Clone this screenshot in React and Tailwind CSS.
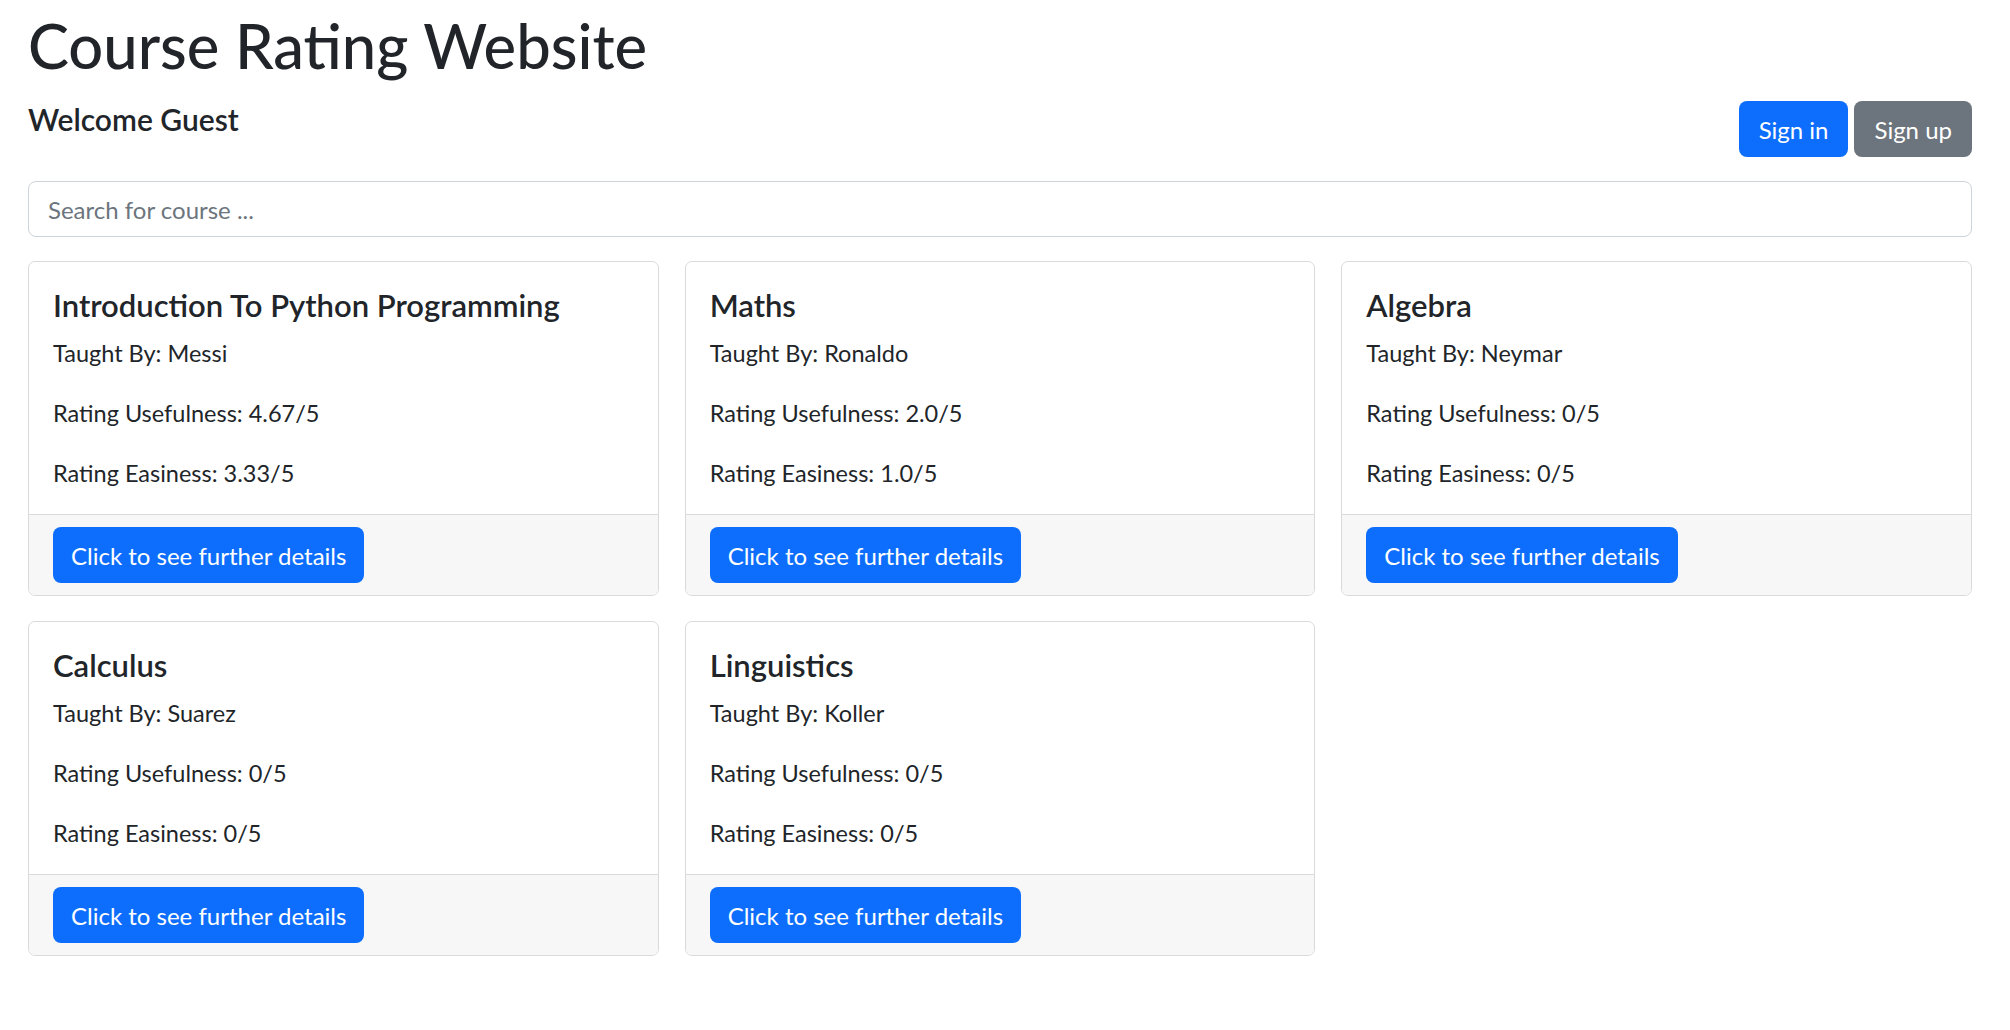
import React from "react";

const courses = [
  { title: "Introduction To Python Programming", teacher: "Messi", useful: "4.67/5", easy: "3.33/5" },
  { title: "Maths", teacher: "Ronaldo", useful: "2.0/5", easy: "1.0/5" },
  { title: "Algebra", teacher: "Neymar", useful: "0/5", easy: "0/5" },
  { title: "Calculus", teacher: "Suarez", useful: "0/5", easy: "0/5" },
  { title: "Linguistics", teacher: "Koller", useful: "0/5", easy: "0/5" },
];

function CourseCard({ c }) {
  return (
    <div className="flex flex-col overflow-hidden rounded-[7px] border border-[#dadada] bg-white">
      <div className="px-[24px] pt-[25px] pb-[23px]">
        <h5 className="mb-[12px] text-[31px] font-semibold leading-[36px]">{c.title}</h5>
        <p className="mb-[24px] text-[23.5px] leading-[36px]">Taught By: {c.teacher}</p>
        <p className="mb-[24px] text-[23.5px] leading-[36px]">Rating Usefulness: {c.useful}</p>
        <p className="text-[23.5px] leading-[36px]">Rating Easiness: {c.easy}</p>
      </div>
      <div className="border-t border-[#dadada] bg-[#f7f7f7] px-[24px] py-[12px]">
        <button className="h-[56px] rounded-[8px] bg-[#0d6efd] px-[18px] pt-[1px] text-[24px] leading-[36px] text-white">
          Click to see further details
        </button>
      </div>
    </div>
  );
}

export default function App() {
  return (
    <div
      className="min-h-screen bg-white pl-[28px] pr-[38px] pt-[9px] pb-[40px] text-[#212529]"
      style={{ fontFamily: 'Lato, "Liberation Sans", sans-serif' }}
    >
      <h1 className="text-[61.5px] font-medium leading-[72px]">Course Rating Website</h1>
      <div className="mt-[20px] flex items-start justify-between">
        <h5 className="text-[30px] font-semibold leading-[36px]">Welcome Guest</h5>
        <div className="flex gap-[6px]">
          <button className="h-[56px] rounded-[8px] bg-[#0d6efd] px-[20px] pt-[1px] text-[24px] leading-[36px] text-white">
            Sign in
          </button>
          <button className="h-[56px] rounded-[8px] bg-[#6c757d] px-[20px] pt-[1px] text-[24px] leading-[36px] text-white">
            Sign up
          </button>
        </div>
      </div>
      <input
        type="text"
        placeholder="Search for course ..."
        className="mt-[24px] block h-[56px] w-full rounded-[8px] border border-[#ced4da] px-[19px] text-[24px] text-[#212529] placeholder:text-[#6c757d] outline-none"
      />
      <div className="mt-[24px] grid grid-cols-3 gap-x-[26px] gap-y-[25px]">
        {courses.map((c) => (
          <CourseCard key={c.title} c={c} />
        ))}
      </div>
    </div>
  );
}
